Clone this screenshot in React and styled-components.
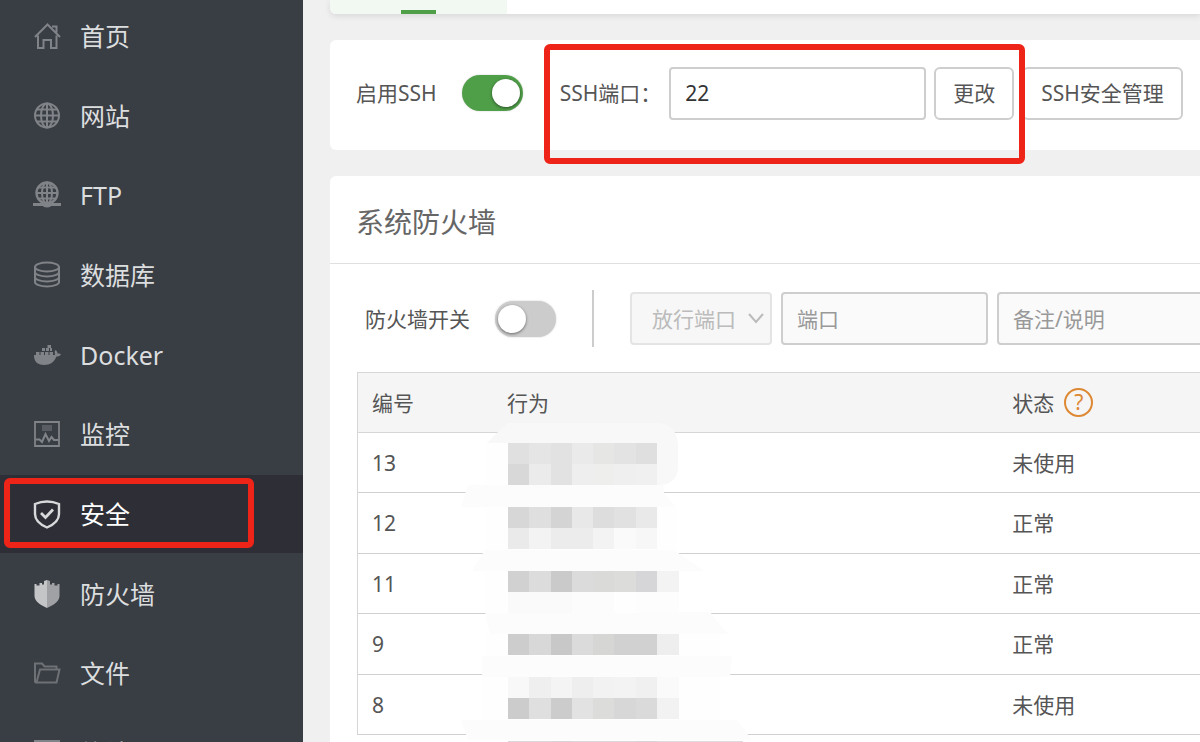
import React from 'react';
import styled, { createGlobalStyle } from 'styled-components';

const GlobalStyle = createGlobalStyle`
    * {
        box-sizing: border-box;
    }

    body {
        margin: 0;
        overflow: hidden;
        background: #f0f0f0;
        color: #555;
        font-family: "Noto Sans", "Noto Sans CJK SC", sans-serif;
        font-size: 21px;
        line-height: 32px;
    }

    button, input, select {
        font: inherit;
        color: inherit;
    }
`

const Page = styled.div`
    display: flex;
    height: 100vh;
    overflow: hidden;
`

const Sidebar = styled.aside`
    position: relative;
    flex: none;
    width: 303px;
    background: #393d44;
`

const Menu = styled.nav`
    display: grid;
    grid-auto-rows: 78px 77px 78px;
    row-gap: 2px;
    margin-top: -3px;
`

const MenuLink = styled.a`
    display: flex;
    align-items: center;
    gap: 19px;
    padding-left: 33px;
    font-size: 25px;
    text-decoration: none;
    color: ${props => props.$active ? '#fff' : '#dcdddf'};
    background: ${props => props.$active ? '#2d2e36' : 'transparent'};

    svg {
        flex: none;
        color: ${props => props.$active ? '#d8d9da' : '#808387'};
    }
`

const Main = styled.main`
    flex: 1;
    min-width: 0;
    display: flex;
    flex-direction: column;
    gap: 26px;
    padding-left: 27px;
`

const TabBar = styled.div`
    flex: none;
    height: 14px;
    border-radius: 0 0 0 6px;
    background: #fff;
    box-shadow: 0 2px 6px rgba(0, 0, 0, 0.1);
`

const ActiveTab = styled.div`
    display: flex;
    justify-content: center;
    align-items: flex-end;
    width: 177px;
    height: 100%;
    border-radius: 0 0 0 6px;
    background: #f2f9f3;

    &::after {
        content: '';
        width: 35px;
        height: 4px;
        background: #4f9e48;
    }
`

const Card = styled.section`
    position: relative;
    flex: none;
    border-radius: 6px 0 0 6px;
    background: #fff;
`

const SshRow = styled.div`
    display: flex;
    align-items: center;
    gap: 8px;
    height: 110px;
    padding: 0 12px 4px 26px;
`

const SwitchField = styled.label`
    display: flex;
    align-items: center;
    gap: 25px;
    white-space: nowrap;
`

const Switch = styled.input`
    appearance: none;
    position: relative;
    width: 61px;
    height: 36px;
    margin: 0;
    border-radius: 18px;
    background: #ccc;
    box-shadow: 0 0 2px rgba(0, 0, 0, 0.2);

    &::after {
        content: '';
        position: absolute;
        top: 4px;
        left: 3px;
        width: 28px;
        height: 28px;
        border-radius: 50%;
        background: #fff;
        box-shadow: 0 1px 3px rgba(0, 0, 0, 0.5);
    }

    &:checked {
        background: #4f9e48;
    }

    &:checked::after {
        left: 30px;
    }
`

const FieldLabel = styled.label`
    margin-left: 29px;
    white-space: nowrap;
`

const TextInput = styled.input`
    flex: none;
    width: ${props => props.$width}px;
    height: 53px;
    padding: 0 14px;
    border: 2px solid #cecece;
    border-radius: 4px;
    background: ${props => props.$muted ? '#fafafa' : '#fff'};
    color: #333;
    outline: none;

    &::placeholder {
        color: #999;
        opacity: 1;
    }
`

const Button = styled.button`
    flex: none;
    height: 53px;
    padding: 0 17px;
    border: 2px solid #cecece;
    border-radius: 6px;
    background: #fff;
    white-space: nowrap;
    cursor: pointer;
`

const CardTitle = styled.h2`
    margin: 0;
    padding: 26px 26px 21px;
    border-bottom: 1px solid #e0e0e0;
    font-size: 28px;
    font-weight: 400;
    line-height: 40px;
    color: #666;
`

const FirewallBar = styled.div`
    display: flex;
    align-items: center;
    gap: 9px;
    padding: 26px 0 25px 35px;
    overflow: hidden;
`

const Divider = styled.span`
    flex: none;
    width: 2px;
    height: 57px;
    margin: 0 27px;
    background: #ccc;
`

const SelectWrap = styled.div`
    position: relative;
    flex: none;

    svg {
        position: absolute;
        top: 20px;
        right: 8px;
        pointer-events: none;
    }
`

const Select = styled.select`
    appearance: none;
    display: block;
    width: 142px;
    height: 53px;
    padding: 0 20px;
    border: 2px solid #e4e4e4;
    border-radius: 4px;
    background: #f7f7f7;
    color: #bbb;
    opacity: 1;
`

const TableWrap = styled.div`
    position: relative;
    margin-left: 27px;
    padding-bottom: 60px;
`

const RuleTable = styled.table`
    width: 100%;
    table-layout: fixed;
    border-collapse: separate;
    border-spacing: 0;
    border-top: 1px solid #d6d6d6;
    border-left: 1px solid #d6d6d6;
`

const HeadCell = styled.th`
    width: ${props => props.$width || 'auto'};
    height: 60px;
    padding: 0 14px;
    border-bottom: 1px solid #d6d6d6;
    background: #f5f5f5;
    font-weight: 400;
    text-align: left;
`

const HeadContent = styled.span`
    display: flex;
    align-items: center;
    gap: 10px;
`

const Row = styled.tr`
    height: 60px;

    &:nth-child(even) {
        height: 61px;
    }
`

const Cell = styled.td`
    padding: 0 14px;
    border-bottom: 1px solid #d0d0d0;
`

const HelpButton = styled.button`
    width: 29px;
    height: 29px;
    padding: 0;
    border: 2px solid #dd8833;
    border-radius: 50%;
    background: transparent;
    color: #dd8833;
    line-height: 25px;
`

const MosaicLayer = styled.svg`
    position: absolute;
    top: 48px;
    left: 83px;
    pointer-events: none;
`

const Highlight = styled.div`
    position: absolute;
    top: ${props => props.$top}px;
    left: ${props => props.$left}px;
    width: ${props => props.$width}px;
    height: ${props => props.$height}px;
    border: 6px solid #ee2418;
    border-radius: 6px;
    pointer-events: none;
`

const Icon = ({ children }) => (
    <svg width="28" height="30" viewBox="0 0 28 30" fill="none" stroke="currentColor" strokeWidth="2" aria-hidden="true">
        {children}
    </svg>
);

const icons = {
    home: (
        <Icon>
            <path d="M2 16 14.500 3.500 27 16M19 5.500h4.500v6M5 14.500v12.500h5.500v-8h7.500v8h5.500V14.500" />
        </Icon>
    ),
    globe: (
        <Icon>
            <circle cx="14" cy="14.500" r="12" />
            <ellipse cx="14" cy="14.500" rx="6" ry="12" />
            <path d="M14 2.500v24M2 14.500h24M4 8.500h20M4 20.500h20" />
        </Icon>
    ),
    ftp: (
        <Icon>
            <circle cx="14" cy="13" r="10.500" strokeWidth="2.400" />
            <ellipse cx="14" cy="13" rx="5" ry="10.500" />
            <path d="M14 2.500v21M3.500 13h21M5.500 7.500h17M5.500 18.500h17" />
            <path d="M0 24.500h28" strokeWidth="3" />
            <ellipse cx="14" cy="24.500" rx="4.500" ry="3" fill="currentColor" stroke="none" />
        </Icon>
    ),
    database: (
        <Icon>
            <ellipse cx="14" cy="7" rx="12" ry="4.500" />
            <path d="M2 7v15c0 2.500 5.400 4.500 12 4.500s12-2 12-4.500V7M2 12c0 2.500 5.400 4.500 12 4.500s12-2 12-4.500M2 17c0 2.500 5.400 4.500 12 4.500s12-2 12-4.500" />
        </Icon>
    ),
    docker: (
        <Icon>
            <path
                d="M1 15h21c0-2-1-3.500.5-5 1.500 1 2 2.200 2 3.500 1 0 2 .1 3.500.7-.8 1.700-2.500 2.300-4.500 2.300C21.500 21.500 17.500 25 11 25 4.500 25 .8 21.500 1 15Z"
                fill="currentColor"
                stroke="none"
            />
            <path d="M3 13.500h3.500M7.500 13.500h3.500M12 13.500h3.500M16.500 13.500h3.500M9 9.500h3M13 9.500h3M17 9.500h2M14.500 6.500h3.500" strokeWidth="3" />
        </Icon>
    ),
    monitor: (
        <Icon>
            <path d="M2 3h24v24H2Z" strokeWidth="1.800" />
            <path d="M9 7.500h10M9 10.500h10" strokeWidth="3" opacity="0.45" />
            <path d="M2.500 20.500h4l2.500 2.500 3.500-8 3.500 7 2.500-4 2.500 3h4.500" />
        </Icon>
    ),
    shieldCheck: (
        <Icon>
            <path d="M14 2.500c3.500 0 8.500 1 12 2.500v10c0 6-5 10.500-12 13.500C7 25.500 2 21 2 15V5c3.500-1.500 8.500-2.500 12-2.500Z" strokeWidth="2.400" />
            <path d="m8 14 4.500 4.500 7.500-8" strokeWidth="2.800" />
        </Icon>
    ),
    firewall: (
        <Icon>
            <path d="M14 1v28C7 26 1.500 22 1.500 17V5h2v1.500h3V4h2.500v1.500h2V2Z" fill="#c4c5c6" stroke="none" />
            <path d="M14 1v28c7-3 12.500-7 12.500-12V5h-2v1.500h-3V4h-2.500v1.500h-2V2Z" fill="#9fa1a4" stroke="none" />
        </Icon>
    ),
    folder: (
        <Icon>
            <path d="M6 24.500H3c-.8 0-1-.4-1-1V5.500h7l2.500 3h12v3.500M3.500 24.500 7 11.500h19.500l-3 13Z" opacity="0.75" />
        </Icon>
    ),
    terminal: (
        <Icon>
            <path d="M2 3h24v22H2ZM7 9l5 5-5 5M14 19h7" />
        </Icon>
    ),
};

const menuItems = [
    { label: '首页', icon: 'home' },
    { label: '网站', icon: 'globe' },
    { label: 'FTP', icon: 'ftp' },
    { label: '数据库', icon: 'database' },
    { label: 'Docker', icon: 'docker' },
    { label: '监控', icon: 'monitor' },
    { label: '安全', icon: 'shieldCheck', active: true },
    { label: '防火墙', icon: 'firewall' },
    { label: '文件', icon: 'folder' },
    { label: '终端', icon: 'terminal' },
];

const rules = [
    { id: 13, status: '未使用' },
    { id: 12, status: '正常' },
    { id: 11, status: '正常' },
    { id: 9, status: '正常' },
    { id: 8, status: '未使用' },
];

// one entry per line of blocks: y offset and the fill of each block
const mosaic = [
    [23, ['#e0e0e0', '#e5e5e5', '#e2e2e2', '#eaeaea', '#e6e6e4', '#e3e3e3', '#dfdfdf']],
    [44, ['#d8d8d8', '#ebebeb', '#e2e2e2', '#eeeeee', '#eeeeed', '#efefef', '#f0f0f0']],
    [87, ['#d7d7d7', '#dfdfdf', '#d4d4d4', '#e8e8e8', '#dddddd', '#e1e1e1', '#e9e9e9']],
    [108, ['#eaeaea', '#f3f3f3', '#ececec', '#ececec', '#f3f3f3', '#fafafa', '#f7f7f7']],
    [151, ['#d1d1d1', '#dcdcdc', '#cacaca', '#dbdbdb', '#dadad8', '#dcdcdb', '#d6d6d9', '#f3f3f3']],
    [172, ['#fafafa', '#fafafa', '#fafafa', '#fcfcfc', '#fcfcfc', '#fefefe', '#fdfdfd', '#fdfdfd']],
    [214, ['#cdcdcd', '#d8d8d8', '#c8c8c8', '#dbdbdb', '#d6d6d5', '#d1d1d1', '#d1d1d1', '#eeeeee']],
    [257, ['#f8f8f8', '#efefef', '#f4f4f4', '#eeeeee', '#f2f2f2', '#f3f3f3', '#f0f0f0', '#fafafa']],
    [278, ['#cccccc', '#dfdfdf', '#cccccc', '#e2e2e2', '#dcdcda', '#d7d7d7', '#dadada', '#f2f2f2']],
    [321, ['#d8d8d8', '#d8d8d8', '#d4d4d4', '#d8d8d8', '#d8d8d8', '#d8d8d8', '#d4d4d4', '#dcdcdc', '#dcdcdc', '#dcdcdc', '#dcdcdc']],
];

function Mosaic() {
    return (
        <MosaicLayer width="320" height="330" viewBox="0 0 320 330" aria-hidden="true">
            <path d="M47 23 58 12 68 3H216c14 0 22 8 22 24v20c0 12-8 18-20 18H47Z" fill="#f8f8f8" />
            <path d="M47 23H68V65H47Z" fill="#fefefe" />
            <path d="M21 87 28 65H224V73L236 87ZM32 151 45 130H234L264 151ZM45 192H270L288 214H50ZM42 236H292L290 257H42ZM21 300H297L312 320H28Z" fill="#fcfcfc" />
            <path d="M47 87H237V130H47ZM45 151H238V193H45ZM47 214H280V236H47ZM42 257H280V300H42Z" fill="#fefefe" />
            {mosaic.map(([y, fills]) => fills.map((fill, i) => (
                <rect key={`${y}-${i}`} x={Math.round(68 + i * 21.25)} y={y} width={i === 6 ? 21 : 22} height="21" fill={fill} />
            )))}
        </MosaicLayer>
    );
}

function App() {
    return (
        <Page>
            <GlobalStyle />
            <Sidebar>
                <Menu>
                    {menuItems.map(item => (
                        <MenuLink key={item.label} href="#" $active={item.active}>
                            {icons[item.icon]}
                            {item.label}
                        </MenuLink>
                    ))}
                </Menu>
                <Highlight $top={478} $left={4} $width={250} $height={70} />
            </Sidebar>
            <Main>
                <TabBar>
                    <ActiveTab />
                </TabBar>
                <Card>
                    <SshRow>
                        <SwitchField>
                            启用SSH
                            <Switch type="checkbox" defaultChecked />
                        </SwitchField>
                        <FieldLabel htmlFor="ssh-port">SSH端口：</FieldLabel>
                        <TextInput id="ssh-port" type="text" defaultValue="22" $width={257} />
                        <Button type="button">更改</Button>
                        <Button type="button">SSH安全管理</Button>
                    </SshRow>
                    <Highlight $top={4} $left={214} $width={481} $height={120} />
                </Card>
                <Card>
                    <CardTitle>系统防火墙</CardTitle>
                    <FirewallBar>
                        <SwitchField>
                            防火墙开关
                            <Switch type="checkbox" />
                        </SwitchField>
                        <Divider />
                        <SelectWrap>
                            <Select aria-label="放行端口" disabled>
                                <option>放行端口</option>
                            </Select>
                            <svg width="16" height="12" viewBox="0 0 16 12" fill="none" stroke="#bbb" strokeWidth="2" aria-hidden="true">
                                <path d="m1 2 7 8 7-8" />
                            </svg>
                        </SelectWrap>
                        <TextInput type="text" placeholder="端口" aria-label="端口" $width={207} $muted />
                        <TextInput type="text" placeholder="备注/说明" aria-label="备注/说明" $width={257} $muted />
                    </FirewallBar>
                    <TableWrap>
                        <RuleTable>
                            <thead>
                                <tr>
                                    <HeadCell $width="135px">编号</HeadCell>
                                    <HeadCell $width="60%">行为</HeadCell>
                                    <HeadCell>
                                        <HeadContent>
                                            状态
                                            <HelpButton type="button">?</HelpButton>
                                        </HeadContent>
                                    </HeadCell>
                                </tr>
                            </thead>
                            <tbody>
                                {rules.map(rule => (
                                    <Row key={rule.id}>
                                        <Cell>{rule.id}</Cell>
                                        <Cell />
                                        <Cell>{rule.status}</Cell>
                                    </Row>
                                ))}
                            </tbody>
                        </RuleTable>
                        <Mosaic />
                    </TableWrap>
                </Card>
            </Main>
        </Page>
    );
}

export default App;
